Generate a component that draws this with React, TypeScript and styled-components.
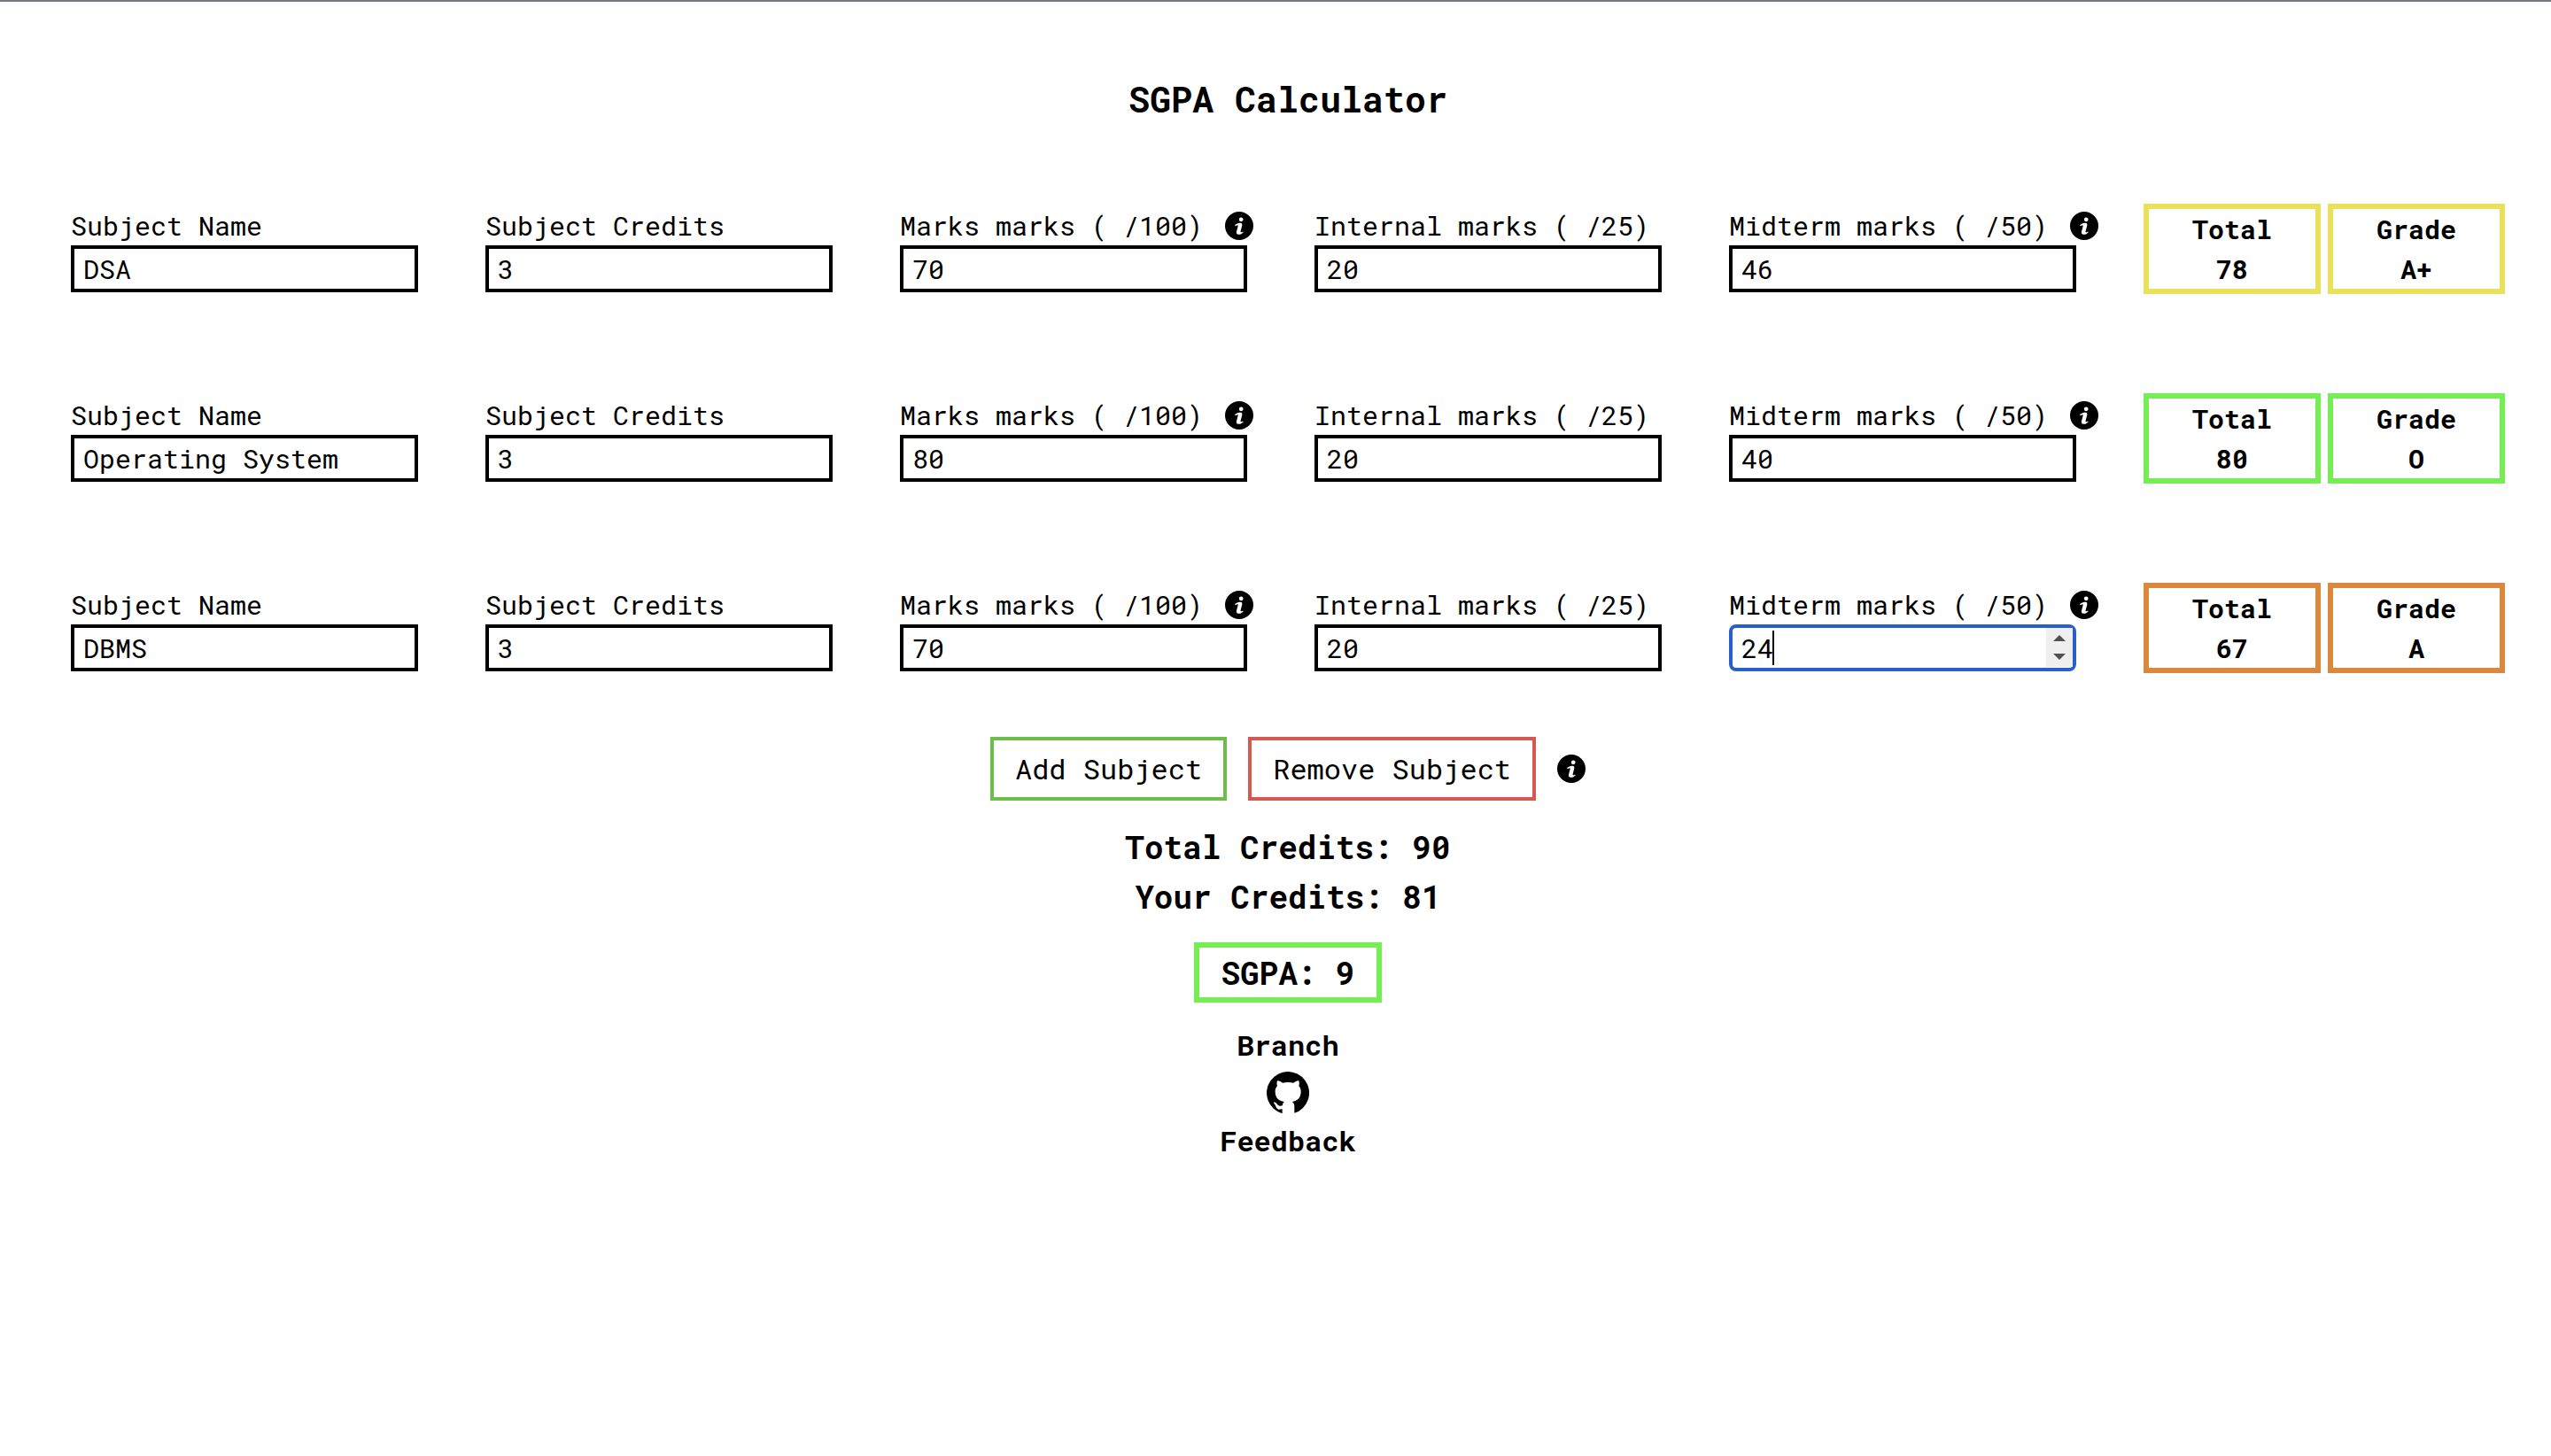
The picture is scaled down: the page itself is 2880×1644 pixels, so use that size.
import React, { useState } from "react";
import styled, { createGlobalStyle } from "styled-components";

const GlobalStyle = createGlobalStyle`
  *, *::before, *::after {
    box-sizing: border-box;
  }
  body {
    margin: 0;
    background: #fff;
    color: #000;
    font-family: "Roboto Mono", "DejaVu Sans Mono", monospace;
    font-size: 30px;
    line-height: 45px;
  }
`;

const Page = styled.main`
  display: flex;
  flex-direction: column;
  align-items: center;
  gap: 24px;
  padding: 80px 52px 80px 80px;
  border-top: 2px solid #707a84;
`;

const Title = styled.h1`
  margin: 0 0 64px;
  font-size: 40px;
  line-height: 60px;
  font-weight: 700;
`;

const SubjectList = styled.div`
  display: flex;
  flex-direction: column;
  gap: 112px;
  width: 100%;
  margin-bottom: 48px;
`;

const SubjectRow = styled.div`
  display: grid;
  grid-template-columns: repeat(5, minmax(0, 1fr)) 408px;
  align-items: center;
`;

const Field = styled.div`
  display: flex;
  flex-direction: column;
`;

const LabelLine = styled.div`
  display: flex;
  align-items: center;
  gap: 25px;
  white-space: nowrap;
`;

const InfoButton = styled.button`
  display: flex;
  flex: none;
  padding: 0;
  border: 0;
  background: none;
  color: #000;
  font-size: 32px;
  cursor: pointer;
`;

const Icon = styled.svg`
  display: block;
  width: 1em;
  height: 1em;
  fill: currentColor;
`;

const Control = styled.div`
  position: relative;
  margin-right: 76px;
`;

const Input = styled.input<{ $active?: boolean }>`
  display: block;
  width: 100%;
  height: 53px;
  padding: 0 10px;
  border: 4px solid ${(p) => (p.$active ? "#275fcc" : "#000")};
  border-radius: ${(p) => (p.$active ? "8px" : "0")};
  outline: none;
  background: #fff;
  color: #000;
  font: inherit;
  appearance: textfield;

  &::-webkit-inner-spin-button {
    appearance: none;
    margin: 0;
  }
`;

const Caret = styled.span`
  position: absolute;
  top: 7px;
  left: calc(13px + 2ch);
  width: 2px;
  height: 39px;
  background: #000;
`;

const Spinner = styled.div`
  position: absolute;
  top: 4px;
  right: 4px;
  bottom: 5px;
  width: 30px;
  display: flex;
  flex-direction: column;
  background: #efefef;
`;

const SpinButton = styled.button<{ $down?: boolean }>`
  display: flex;
  flex: 1;
  justify-content: center;
  align-items: ${(p) => (p.$down ? "flex-start" : "flex-end")};
  padding: 7px 0;
  border: 0;
  background: none;
  color: #505050;
`;

const Results = styled.div`
  display: grid;
  grid-template-columns: 1fr 1fr;
  gap: 8px;
`;

const ResultBox = styled.div<{ $color: string }>`
  display: flex;
  flex-direction: column;
  align-items: center;
  border: 6px solid ${(p) => p.$color};
  font-weight: 700;
`;

const Actions = styled.div`
  display: flex;
  align-items: center;
  gap: 24px;
`;

const ActionButton = styled.button<{ $color: string }>`
  padding: 8px 24px;
  border: 4px solid ${(p) => p.$color};
  background: #fff;
  color: #000;
  font: inherit;
  font-size: 32px;
  line-height: 48px;
  cursor: pointer;
`;

const Credits = styled.div`
  display: flex;
  flex-direction: column;
  align-items: center;
  font-size: 36px;
  line-height: 56px;
  font-weight: 700;
`;

const Sgpa = styled.div`
  padding: 0 24px;
  border: 6px solid #75ed55;
  font-size: 36px;
  line-height: 56px;
  font-weight: 700;
`;

const Footer = styled.footer`
  display: flex;
  flex-direction: column;
  align-items: center;
  font-size: 32px;
  line-height: 48px;
  font-weight: 700;
`;

const FooterLink = styled.a`
  color: inherit;
  text-decoration: none;
`;

const IconLink = styled(FooterLink)`
  display: flex;
  padding: 6px 0;
  font-size: 48px;
`;

interface FieldSpec {
  key: string;
  label: string;
  info?: boolean;
  numeric?: boolean;
}

interface Subject {
  values: Record<string, string>;
  total: number;
  grade: string;
  color: string;
}

const FIELDS: FieldSpec[] = [
  { key: "name", label: "Subject Name" },
  { key: "credits", label: "Subject Credits", numeric: true },
  { key: "marks", label: "Marks marks ( /100)", info: true, numeric: true },
  { key: "internal", label: "Internal marks ( /25)", numeric: true },
  { key: "midterm", label: "Midterm marks ( /50)", info: true, numeric: true },
];

const SUBJECTS: Subject[] = [
  {
    values: { name: "DSA", credits: "3", marks: "70", internal: "20", midterm: "46" },
    total: 78,
    grade: "A+",
    color: "#e8e159",
  },
  {
    values: { name: "Operating System", credits: "3", marks: "80", internal: "20", midterm: "40" },
    total: 80,
    grade: "O",
    color: "#75ed55",
  },
  {
    values: { name: "DBMS", credits: "3", marks: "70", internal: "20", midterm: "24" },
    total: 67,
    grade: "A",
    color: "#dc873e",
  },
];

function Info({ about }: { about: string }) {
  return (
    <InfoButton type="button" aria-label={`About ${about}`}>
      <Icon viewBox="0 0 16 16">
        <path
          fillRule="evenodd"
          d="M8 0a8 8 0 1 1 0 16A8 8 0 0 1 8 0ZM9.1 3.2a1.2 1.2 0 1 0 0 2.4a1.2 1.2 0 0 0 0-2.4ZM5.6 7.5C6.6 6.7 7.8 6.4 8.8 6.4C9.7 6.5 9.8 7.2 9.6 8L8.8 11C8.7 11.6 9 11.8 9.4 11.6L10.1 11.2L10.3 11.7C9.3 12.7 8.3 13 7.5 12.9C6.6 12.8 6.3 12 6.5 11.2L7.3 8.3C7.4 7.7 7.2 7.5 6.7 7.7L5.8 8.1Z"
        />
      </Icon>
    </InfoButton>
  );
}

interface SubjectFieldProps {
  spec: FieldSpec;
  id: string;
  initial: string;
  active: boolean;
}

function SubjectField({ spec, id, initial, active }: SubjectFieldProps) {
  const [value, setValue] = useState(initial);
  const step = (by: number) => setValue(String(Number(value) + by));
  return (
    <Field>
      <LabelLine>
        <label htmlFor={id}>{spec.label}</label>
        {spec.info && <Info about={spec.label} />}
      </LabelLine>
      <Control>
        <Input
          id={id}
          type={spec.numeric ? "number" : "text"}
          value={value}
          $active={active}
          onChange={(e) => setValue(e.target.value)}
        />
        {active && (
          <>
            <Caret />
            <Spinner>
              <SpinButton type="button" aria-label="Increase" onClick={() => step(1)}>
                <svg width="14" height="7" viewBox="0 0 14 7" fill="currentColor">
                  <path d="M7 0L14 7H0Z" />
                </svg>
              </SpinButton>
              <SpinButton type="button" aria-label="Decrease" $down onClick={() => step(-1)}>
                <svg width="14" height="7" viewBox="0 0 14 7" fill="currentColor">
                  <path d="M0 0H14L7 7Z" />
                </svg>
              </SpinButton>
            </Spinner>
          </>
        )}
      </Control>
    </Field>
  );
}

export default function App() {
  return (
    <>
      <GlobalStyle />
      <Page>
        <Title>SGPA Calculator</Title>
        <SubjectList>
          {SUBJECTS.map((subject, row) => (
            <SubjectRow key={row}>
              {FIELDS.map((spec) => (
                <SubjectField
                  key={spec.key}
                  spec={spec}
                  id={`${spec.key}-${row}`}
                  initial={subject.values[spec.key]}
                  active={row === SUBJECTS.length - 1 && spec.key === "midterm"}
                />
              ))}
              <Results>
                <ResultBox $color={subject.color}>
                  <span>Total</span>
                  <span>{subject.total}</span>
                </ResultBox>
                <ResultBox $color={subject.color}>
                  <span>Grade</span>
                  <span>{subject.grade}</span>
                </ResultBox>
              </Results>
            </SubjectRow>
          ))}
        </SubjectList>
        <Actions>
          <ActionButton type="button" $color="#6dbd4b">
            Add Subject
          </ActionButton>
          <ActionButton type="button" $color="#d65852">
            Remove Subject
          </ActionButton>
          <Info about="subjects" />
        </Actions>
        <Credits>
          <span>Total Credits: 90</span>
          <span>Your Credits: 81</span>
        </Credits>
        <Sgpa>SGPA: 9</Sgpa>
        <Footer>
          <FooterLink href="#branch">Branch</FooterLink>
          <IconLink href="#github" aria-label="GitHub">
            <Icon viewBox="0 0 144 144">
              <path d="M53 141.4V127C49 128 45 128 42 128C33 127 32 118 29 113C27 109 24 107 24 104C34 102 35 115 44 116C48 117 51 116 54 114C54 109 56 105 60 102C40 100 29 89 29 67C29 59 31 54 36 49C34 43 34 37 36 31C42 30 48 34 54 38C66 35 79 35 91 38C97 34 103 30 109 31C111 37 111 43 109 49C114 54 116 59 116 67C116 89 105 100 86 102C91 105 94 110 94 117V140.6A72 72 0 1 0 53 141.4Z" />
            </Icon>
          </IconLink>
          <FooterLink href="#feedback">Feedback</FooterLink>
        </Footer>
      </Page>
    </>
  );
}
